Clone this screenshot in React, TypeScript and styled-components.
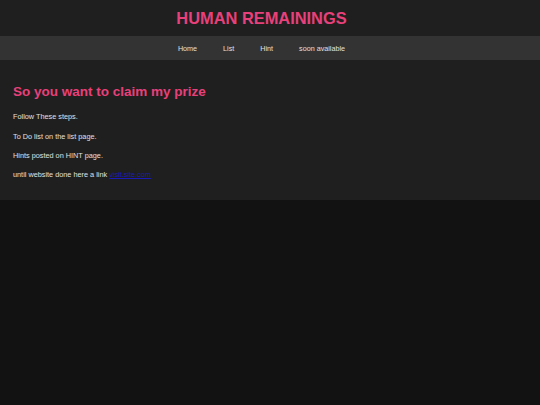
import styled, { createGlobalStyle } from 'styled-components';

const GlobalStyle = createGlobalStyle`
  html, body {
    margin: 0;
    padding: 0;
    background: #121212;
    font-family: 'Liberation Sans', Arial, sans-serif;
  }
`;

const links = ['Home', 'List', 'Hint', 'soon available'];

export default function App() {
  return (
    <>
      <GlobalStyle />
      <Header>
        <h1>HUMAN REMAININGS</h1>
      </Header>
      <Nav>
        {links.map((l) => (
          <NavLink key={l} href='#'>
            {l}
          </NavLink>
        ))}
      </Nav>
      <Main>
        <h2>So you want to claim my prize</h2>
        <p>Follow These steps.</p>
        <p>To Do list on the list page.</p>
        <p>Hints posted on HINT page.</p>
        <p>
          until website done here a link <a href='#'>visit.site.com</a>
        </p>
      </Main>
    </>
  );
}

// content is centred as if a 17px scrollbar sat on the right
const Header = styled.header`
  display: flex;
  justify-content: center;
  align-items: center;
  height: 36px;
  padding-right: 17px;
  background: #1f1f1f;

  h1 {
    margin: 0;
    font-size: 16.4px;
    font-weight: bold;
    color: #e8407a;
  }
`;

const Nav = styled.nav`
  display: flex;
  justify-content: center;
  align-items: center;
  gap: 26px;
  height: 24px;
  padding-right: 17px;
  background: #333333;
`;

const NavLink = styled.a`
  font-size: 7.2px;
  color: #e0e0e0;
  text-decoration: none;
`;

const Main = styled.main`
  display: flex;
  flex-direction: column;
  gap: 10.3px;
  height: 140px;
  box-sizing: border-box;
  padding: 24px 13px 0;
  background: #1f1f1f;

  h2 {
    margin: 0 0 3px;
    font-size: 13.5px;
    font-weight: bold;
    color: #e8407a;
  }

  p {
    margin: 0;
    font-size: 7.3px;
    color: #e0e0e0;
  }

  a {
    color: #1a1ab8;
  }
`;
